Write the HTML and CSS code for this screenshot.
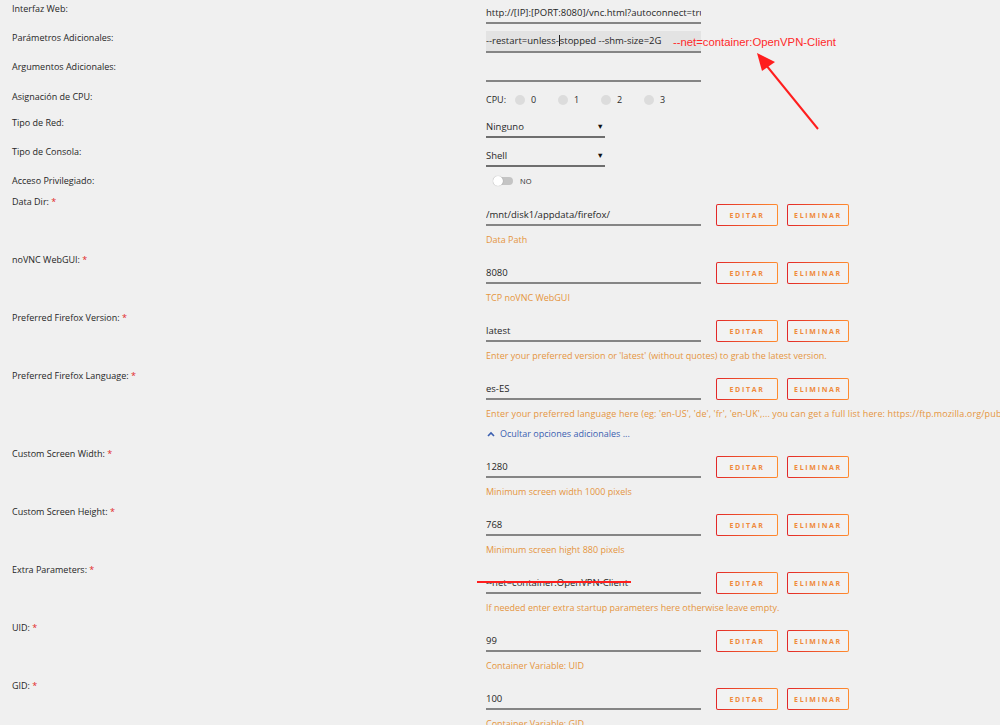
FILE: index.html
```html
<!DOCTYPE html>
<html lang="es">
  <head>
    <meta charset="UTF-8" />
    <meta name="viewport" content="width=device-width, initial-scale=1.0" />
    <link rel="stylesheet" href="styles.css">
    <title>Firefox - Editar contenedor</title>
  </head>
  <body>
    <main class="form">
      <div class="row">
        <div class="label">Interfaz Web:</div>
        <div class="field">
          <input class="text" type="text" value="http://[IP]:[PORT:8080]/vnc.html?autoconnect=true&amp;host=[IP]&amp;port=[PORT:8080]" />
        </div>
      </div>
      <div class="row">
        <div class="label">Parámetros Adicionales:</div>
        <div class="field">
          <div class="text focused">--restart=unless-<span class="caret"></span>stopped --shm-size=2G</div>
        </div>
      </div>
      <div class="row row-wide">
        <div class="label">Argumentos Adicionales:</div>
        <div class="field">
          <input class="text" type="text" value="" />
        </div>
      </div>
      <div class="row">
        <div class="label">Asignación de CPU:</div>
        <div class="field cpus">
          <span>CPU:</span>
          <span class="cpu"><i class="dot"></i>0</span>
          <span class="cpu"><i class="dot"></i>1</span>
          <span class="cpu"><i class="dot"></i>2</span>
          <span class="cpu"><i class="dot"></i>3</span>
        </div>
      </div>
      <div class="row">
        <div class="label">Tipo de Red:</div>
        <div class="field">
          <div class="select">Ninguno<span class="caret-down">&#9660;</span></div>
        </div>
      </div>
      <div class="row">
        <div class="label">Tipo de Consola:</div>
        <div class="field">
          <div class="select">Shell<span class="caret-down">&#9660;</span></div>
        </div>
      </div>
      <div class="row">
        <div class="label">Acceso Privilegiado:</div>
        <div class="field switch-field">
          <span class="switch"><i class="knob"></i></span>
          <span class="switch-text">NO</span>
        </div>
      </div>

      <div class="row env">
        <div class="label">Data Dir: <span class="req">*</span></div>
        <div class="field">
          <div class="line">
            <input class="text" type="text" value="/mnt/disk1/appdata/firefox/" />
            <button class="btn">Editar</button>
            <button class="btn">Eliminar</button>
          </div>
          <div class="desc">Data Path</div>
        </div>
      </div>
      <div class="row env">
        <div class="label">noVNC WebGUI: <span class="req">*</span></div>
        <div class="field">
          <div class="line">
            <input class="text" type="text" value="8080" />
            <button class="btn">Editar</button>
            <button class="btn">Eliminar</button>
          </div>
          <div class="desc">TCP noVNC WebGUI</div>
        </div>
      </div>
      <div class="row env">
        <div class="label">Preferred Firefox Version: <span class="req">*</span></div>
        <div class="field">
          <div class="line">
            <input class="text" type="text" value="latest" />
            <button class="btn">Editar</button>
            <button class="btn">Eliminar</button>
          </div>
          <div class="desc">Enter your preferred version or 'latest' (without quotes) to grab the latest version.</div>
        </div>
      </div>
      <div class="row env">
        <div class="label">Preferred Firefox Language: <span class="req">*</span></div>
        <div class="field">
          <div class="line">
            <input class="text" type="text" value="es-ES" />
            <button class="btn">Editar</button>
            <button class="btn">Eliminar</button>
          </div>
          <div class="desc desc-long">Enter your preferred language here (eg: 'en-US', 'de', 'fr', 'en-UK',... you can get a full list here: https://ftp.mozilla.org/pub/</div>
        </div>
      </div>

      <div class="more">
        <svg class="chev" width="8" height="6" viewBox="0 0 8 6"><path d="M1 5 L4 2 L7 5" fill="none" stroke="#3b5fb0" stroke-width="1.6"/></svg>
        Ocultar opciones adicionales ...
      </div>

      <div class="row env">
        <div class="label">Custom Screen Width: <span class="req">*</span></div>
        <div class="field">
          <div class="line">
            <input class="text" type="text" value="1280" />
            <button class="btn">Editar</button>
            <button class="btn">Eliminar</button>
          </div>
          <div class="desc">Minimum screen width 1000 pixels</div>
        </div>
      </div>
      <div class="row env">
        <div class="label">Custom Screen Height: <span class="req">*</span></div>
        <div class="field">
          <div class="line">
            <input class="text" type="text" value="768" />
            <button class="btn">Editar</button>
            <button class="btn">Eliminar</button>
          </div>
          <div class="desc">Minimum screen hight 880 pixels</div>
        </div>
      </div>
      <div class="row env">
        <div class="label">Extra Parameters: <span class="req">*</span></div>
        <div class="field">
          <div class="line">
            <div class="strike-wrap">
              <input class="text" type="text" value="--net=container:OpenVPN-Client" />
              <span class="strike"></span>
            </div>
            <button class="btn">Editar</button>
            <button class="btn">Eliminar</button>
          </div>
          <div class="desc">If needed enter extra startup parameters here otherwise leave empty.</div>
        </div>
      </div>
      <div class="row env">
        <div class="label">UID: <span class="req">*</span></div>
        <div class="field">
          <div class="line">
            <input class="text" type="text" value="99" />
            <button class="btn">Editar</button>
            <button class="btn">Eliminar</button>
          </div>
          <div class="desc">Container Variable: UID</div>
        </div>
      </div>
      <div class="row env">
        <div class="label">GID: <span class="req">*</span></div>
        <div class="field">
          <div class="line">
            <input class="text" type="text" value="100" />
            <button class="btn">Editar</button>
            <button class="btn">Eliminar</button>
          </div>
          <div class="desc">Container Variable: GID</div>
        </div>
      </div>

      <!-- annotation drawn over the screenshot -->
      <div class="note">--net=container:OpenVPN-Client</div>
      <svg class="arrow" width="80" height="90" viewBox="745 45 80 90">
        <line x1="766" y1="65" x2="818" y2="129" stroke="#ff1e1e" stroke-width="2" />
        <polygon points="757,53 762,71 775,62" fill="#ff1e1e" />
      </svg>
    </main>
  </body>
</html>
```

FILE: styles.css
```css
html,
body {
  overflow: hidden;
}
body {
  margin: 0;
  background: #f0f0f0;
  font-family: "Open Sans", sans-serif;
  color: #2a2a2a;
}
.form {
  position: relative;
  padding: 2px 0 0 12px;
  height: 725px;
  box-sizing: border-box;
}

.row {
  display: grid;
  grid-template-columns: 474px 1fr;
  margin-bottom: 7px;
}
.row-wide {
  margin-bottom: 8px;
}
.label {
  font-size: 9px;
  line-height: 14px;
  color: #262626;
  white-space: nowrap;
}
.req {
  color: #e22828;
}

.field {
  min-width: 0;
}
.text {
  display: block;
  box-sizing: border-box;
  width: 215px;
  height: 22px;
  padding: 0;
  margin: 0;
  border: none;
  border-bottom: 2px solid #858585;
  background: transparent;
  font-family: "Open Sans", sans-serif;
  font-size: 9.5px;
  line-height: 20px;
  color: #262626;
  outline: none;
  white-space: nowrap;
  overflow: hidden;
}
.text.focused {
  background: #e3e3e3;
}
.caret {
  display: inline-block;
  width: 1px;
  height: 11px;
  background: #222;
  vertical-align: -2px;
}

/* cpu pinning */
.cpus {
  display: flex;
  align-items: center;
  height: 19px;
  font-size: 9px;
}
.cpu {
  display: flex;
  align-items: center;
  width: 43px;
}
.cpus > span:first-child {
  margin-right: 9px;
}
.dot {
  display: inline-block;
  width: 10px;
  height: 10px;
  border-radius: 50%;
  background: #dcdcdc;
  margin-right: 6px;
}

/* dropdowns */
.select {
  display: flex;
  justify-content: space-between;
  align-items: center;
  box-sizing: border-box;
  width: 119px;
  height: 22px;
  border-bottom: 2px solid #6e6e6e;
  font-size: 9.5px;
}
.caret-down {
  font-size: 7.5px;
  color: #111;
  margin-right: 1px;
}

/* privileged toggle */
.switch-field {
  display: flex;
  align-items: center;
  height: 14px;
  padding-left: 7px;
}
.switch {
  position: relative;
  width: 20px;
  height: 8px;
  border-radius: 4px;
  background: #c4c4c4;
}
.knob {
  position: absolute;
  left: 0;
  top: -1px;
  width: 10px;
  height: 10px;
  border-radius: 50%;
  background: #fff;
  box-shadow: 0 0 1px rgba(0, 0, 0, 0.35);
}
.switch-text {
  margin-left: 7px;
  font-size: 7.5px;
}

/* container variables */
.env {
  margin-bottom: 6px;
}
.env .field {
  padding-top: 9px;
}
.line {
  display: flex;
  align-items: center;
  gap: 9px;
}
.line .text {
  margin-right: 6px;
}
.btn {
  box-sizing: border-box;
  width: 62px;
  height: 22px;
  padding: 0;
  border: 1.5px solid transparent;
  border-radius: 2px;
  background: linear-gradient(#f2f2f2, #f2f2f2) padding-box,
    linear-gradient(90deg, #e22828, #ff8c2f) border-box;
  color: #ef8a3c;
  font-family: "Open Sans", sans-serif;
  font-size: 7px;
  font-weight: bold;
  letter-spacing: 1.7px;
  text-transform: uppercase;
  cursor: pointer;
}
.desc {
  margin-top: 7px;
  font-size: 9px;
  line-height: 14px;
  color: #e5953e;
  white-space: nowrap;
}
.desc-long {
  letter-spacing: 0.12px;
}

.more {
  display: flex;
  align-items: center;
  gap: 5px;
  margin: 0 0 6px 475px;
  font-size: 9px;
  line-height: 14px;
  color: #3b5fb0;
}

/* red markup on top of the form */
.strike-wrap {
  position: relative;
}
.strike {
  position: absolute;
  left: -9px;
  top: 9px;
  width: 154px;
  height: 2px;
  background: #ff1e1e;
}
.note {
  position: absolute;
  left: 673px;
  top: 36px;
  font-family: "Liberation Sans", sans-serif;
  font-size: 11.3px;
  color: #ff2a2a;
}
.arrow {
  position: absolute;
  left: 745px;
  top: 45px;
}
```
